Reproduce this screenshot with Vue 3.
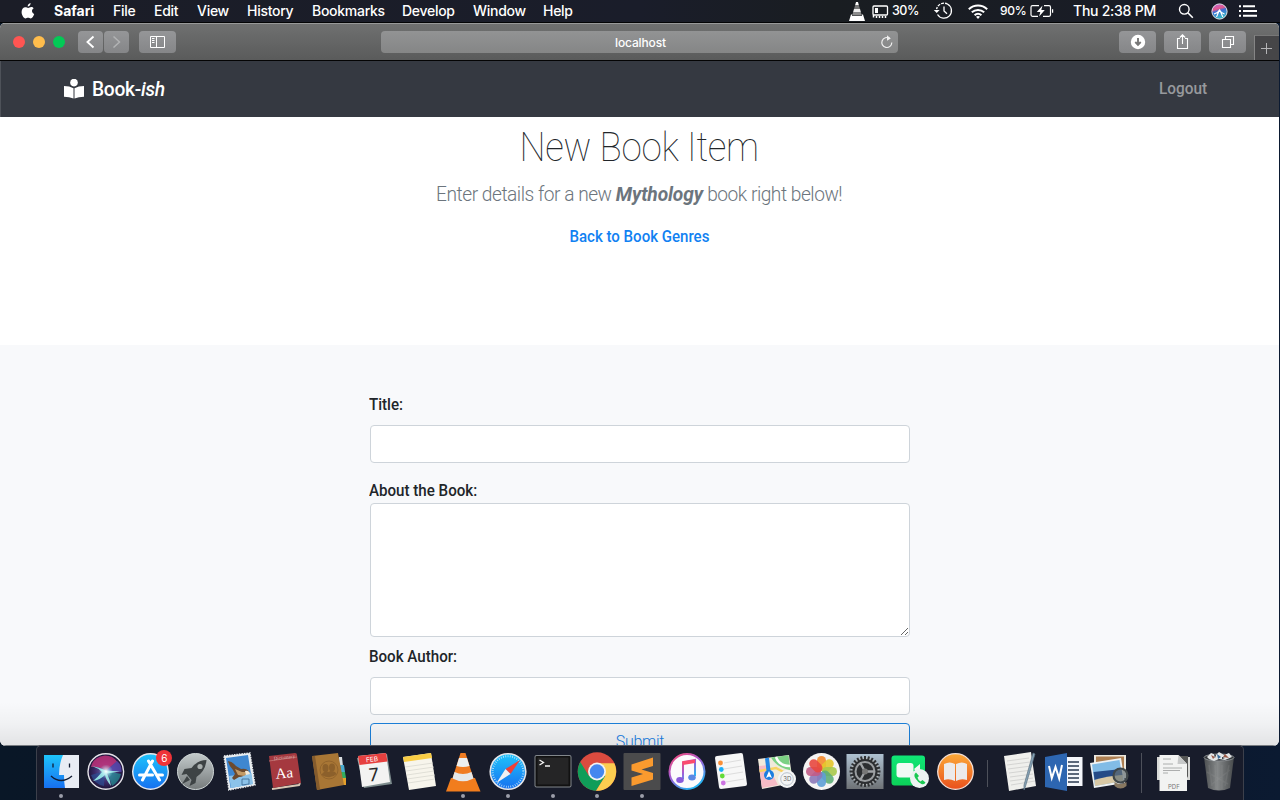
<script setup>
const menus = [
  { t: 'File', w: 41 }, { t: 'Edit', w: 43 }, { t: 'View', w: 50 }, { t: 'History', w: 65 },
  { t: 'Bookmarks', w: 90 }, { t: 'Develop', w: 71 }, { t: 'Window', w: 70 }, { t: 'Help', w: 40 },
]
const petals = ['#f58a2c', '#e6c62c', '#a9c94a', '#5fae78', '#5e9fd6', '#8c79b8', '#c15c86', '#e8483f']
const ticks = Array.from({ length: 24 }, (_, i) => i * 15)
</script>

<template>
  <div class="desktop">
    <header class="menubar">
      <svg class="apple" viewBox="0 0 14 16"><path d="M9.6 0C9.7 1.7 8.3 3.5 6.7 3.5 6.5 1.900 8 .2 9.600 0zM12.600 5.400C11.300 6.200 11 7 11 8c0 1.500 1 2.400 2.200 2.900-.6 1.900-2 4.500-3.500 4.500-1 0-1.400-.6-2.600-.6s-1.700.6-2.600.6C2.600 15.400.6 12 .6 9c0-3 1.800-4.800 3.700-4.800 1.200 0 2 .7 2.900.7.900 0 1.700-.8 3.100-.8 1 0 1.800.5 2.300 1.300z"/></svg>
      <b class="appname">Safari</b>
      <nav class="menus"><span v-for="m in menus" :key="m.t" :style="{ width: m.w + 'px' }">{{ m.t }}</span></nav>
      <div class="status">
        <svg class="s-vlc" width="18" height="20" viewBox="0 0 18 20"><path d="M8 1h2l.8 3H7.200z" fill="#fff"/><path d="M7.200 4h3.600l1.200 4H6z" fill="#777"/><path d="M6 8h6l1 3.500H5z" fill="#eee"/><path d="M5 11.500h8l.8 3H4.200z" fill="#8b8b8b"/><path d="M3 13.500h1.200l-.2 1.500h10l-.2-1.500H15L17 20H1z" fill="#fff"/></svg>
        <svg class="s-mem" width="17" height="15" viewBox="0 0 17 15"><rect x="1" y="2" width="14.500" height="9" rx="1" fill="none" stroke="#fff" stroke-width="1.300"/><path d="M3 4h3v5H3z" fill="#fff"/><path d="M1.500 11v2.500M4.500 12v2M7.500 12v2M10.500 12v2M13.500 12v2" stroke="#fff" stroke-width="1.500"/></svg>
        <span class="p30">30%</span>
        <svg class="s-tm" width="20" height="18" viewBox="0 0 20 18"><path d="M4.500 12.500A7.500 7.500 0 1 0 3.600 7.200" fill="none" stroke="#fff" stroke-width="1.300" stroke-dasharray="30 1 3 1 3 1"/><path d="M.8 8h5.800L3.700 11z" fill="#fff"/><path d="M11 4.500V9l3 2.800" stroke="#fff" stroke-width="1.300" fill="none"/></svg>
        <svg class="s-wifi" width="20" height="15" viewBox="0 0 20 15"><g fill="none" stroke="#fff" stroke-width="2"><path d="M.8 5.200a13.500 13.500 0 0 1 18.400 0"/><path d="M3.800 8.300a9.200 9.200 0 0 1 12.400 0"/><path d="M6.600 11.200a5 5 0 0 1 6.800 0"/></g><path d="M10 15l-2-2.300a3.200 3.200 0 0 1 4 0z" fill="#fff"/></svg>
        <span class="p90">90%</span>
        <svg class="s-bat" width="24" height="14" viewBox="0 0 24 14"><path d="M9 1.700H2.500Q1 1.700 1 3.200v7.600q0 1.500 1.500 1.500H8M14 1.700h5q1.500 0 1.500 1.500v7.600q0 1.500-1.500 1.500h-6M22.600 5.200v3.600" fill="none" stroke="#fff" stroke-width="1.200"/><path d="M12.500 1.500L6.800 8h3.500l-1.200 4.500L14.800 6h-3.500z" fill="#fff"/></svg>
        <span class="clock">Thu 2:38 PM</span>
        <svg class="s-search" width="16" height="16" viewBox="0 0 16 16"><circle cx="6.300" cy="6.300" r="4.800" fill="none" stroke="#fff" stroke-width="1.400"/><path d="M9.800 9.800l5 5" stroke="#fff" stroke-width="1.600"/></svg>
        <svg class="s-siri" width="17" height="17" viewBox="0 0 17 17"><defs><linearGradient id="sm" x1="0" y1="0" x2=".3" y2="1"><stop offset="0" stop-color="#b66ae0"/><stop offset=".4" stop-color="#e5578d"/><stop offset=".55" stop-color="#3c6fd4"/><stop offset="1" stop-color="#35b7c7"/></linearGradient></defs><circle cx="8.500" cy="8.500" r="7.600" fill="url(#sm)" stroke="#e6e6ef" stroke-width="1"/><path d="M3 11q4-1 5.500-4 1.500 3 5 4M8.500 7L5.500 14M8.800 7l3 7" fill="none" stroke="#fff" stroke-width="1.100"/></svg>
        <svg class="s-list" width="18" height="12" viewBox="0 0 18 12"><path d="M0 1.200h2M4 1.200h12M0 6h2M4 6h14M0 10.800h2M4 10.800h14" stroke="#fff" stroke-width="1.900"/></svg>
      </div>
    </header>

    <main class="window">
      <div class="toolbar">
        <i class="light red"></i><i class="light amber"></i><i class="light green"></i>
        <div class="btn back"><svg width="25" height="22" viewBox="0 0 25 22"><path d="M15.500 5.500L9.500 11l6 5.500" fill="none" stroke="#fff" stroke-width="1.900"/></svg></div>
        <div class="btn fwd"><svg width="25" height="22" viewBox="0 0 25 22"><path d="M9.500 5.500l6 5.500-6 5.500" fill="none" stroke="#b2b3b4" stroke-width="1.500"/></svg></div>
        <div class="btn side"><svg width="37" height="22" viewBox="0 0 37 22"><path d="M11.500 5.500h14v11h-14zM17.500 5.500v11M13 7.500h2.500M13 9.500h2.500M13 11.500h2.500" fill="none" stroke="#fff"/></svg></div>
        <div class="address"><span>localhost</span><svg class="reload" width="13" height="14" viewBox="0 0 13 14"><path d="M9.500 3.300A5 5 0 1 0 11.800 7.500" fill="none" stroke="#eee" stroke-width="1.200"/><path d="M7 .3v5.400L10.800 3.400z" fill="#eee"/></svg></div>
        <div class="btn dl"><svg width="37" height="22" viewBox="0 0 37 22"><circle cx="19" cy="11" r="7.200" fill="#fff"/><path d="M19 7V13M16.300 11L19 13.800l2.700-2.800" stroke="#777" stroke-width="1.900" fill="none"/></svg></div>
        <div class="btn share"><svg width="37" height="22" viewBox="0 0 37 22"><path d="M16 7.500h-2.500v10h10v-10H21M18.500 13V4M15.800 6.500l2.700-2.700 2.700 2.700" fill="none" stroke="#fff" stroke-width="1.100"/></svg></div>
        <div class="btn tabs"><svg width="37" height="22" viewBox="0 0 37 22"><path d="M13.500 8.500h8v8h-8zM16.500 8V5.500h8v8H22" fill="none" stroke="#fff" stroke-width="1.100"/></svg></div>
        <div class="newtab"><svg width="23" height="25" viewBox="0 0 23 25"><path d="M6 12.500h11M11.500 7v11" stroke="#b4b4b6"/></svg></div>
      </div>

      <div class="navbar">
        <svg width="20" height="20" viewBox="0 0 20 20"><circle cx="10" cy="3.600" r="3.800" fill="#fff"/><path d="M0 7q5.500 0 9.500 2.300v10.200Q5.500 18 0 17.800zM20 7q-5.500 0-9.500 2.300v10.200Q14.500 18 20 17.800z" fill="#fff"/></svg>
        <div class="brand">Book-<em>ish</em></div>
        <a class="logout">Logout</a>
      </div>

      <section class="intro">
        <h1>New Book Item</h1>
        <p class="lead">Enter details for a new <em>Mythology</em> book right below!</p>
        <a class="genres">Back to Book Genres</a>
      </section>

      <section class="formarea">
        <form @submit.prevent>
          <label class="l1">Title:</label>
          <input type="text" />
          <label class="l2">About the Book:</label>
          <textarea></textarea>
          <label class="l3">Book Author:</label>
          <input type="text" />
          <button type="submit">Submit</button>
        </form>
      </section>
      <div class="fade"></div>
    </main>

    <footer class="dock">
      <svg width="0" height="0" class="defs"><defs>
        <linearGradient id="blue" x2="0" y2="1"><stop offset="0" stop-color="#1ec4fb"/><stop offset="1" stop-color="#1770f0"/></linearGradient>
        <linearGradient id="silver" x2="0" y2="1"><stop offset="0" stop-color="#c3cacb"/><stop offset="1" stop-color="#767b7c"/></linearGradient>
        <linearGradient id="orange" x2="0" y2="1"><stop offset="0" stop-color="#fcaa38"/><stop offset="1" stop-color="#e9501c"/></linearGradient>
        <linearGradient id="green" x2="0" y2="1"><stop offset="0" stop-color="#10e676"/><stop offset="1" stop-color="#0cd159"/></linearGradient>
        <linearGradient id="note" x2=".6" y2="1"><stop offset="0" stop-color="#fb4b6e"/><stop offset=".5" stop-color="#a45bd6"/><stop offset="1" stop-color="#28b4f4"/></linearGradient>
        <linearGradient id="gear" x2="0" y2="1"><stop offset="0" stop-color="#aec1d2"/><stop offset="1" stop-color="#6e7276"/></linearGradient>
        <radialGradient id="siri"><stop offset="0" stop-color="#6b6fb0"/><stop offset=".6" stop-color="#3c2b6b"/><stop offset="1" stop-color="#1c1436"/></radialGradient>
        <radialGradient id="glow"><stop offset="0" stop-color="#fff"/><stop offset="1" stop-color="#9fe8f4" stop-opacity="0"/></radialGradient>
        <linearGradient id="trash"><stop offset="0" stop-color="#4c4f51"/><stop offset=".45" stop-color="#858889"/><stop offset="1" stop-color="#46494b"/></linearGradient>
      </defs></svg>

      <!-- Finder -->
      <div class="app run"><svg viewBox="0 0 40 40"><path d="M3 3h35v33H3z" fill="url(#blue)"/><path d="M22 3h16v33H24q-1-6-1-13h-5q0-11 4-20z" fill="#e8ecf4"/><path d="M12 11.500v4M28.500 11.500v4" stroke="#111b32" stroke-width="1.300"/><path d="M10 24q10 9 21 0" fill="none" stroke="#111b32" stroke-width="1.400"/></svg></div>
      <!-- Siri -->
      <div class="app"><svg viewBox="0 0 40 40"><circle cx="19.800" cy="19.500" r="17.800" fill="url(#siri)" stroke="#e5e3e9" stroke-width="1.400"/><path d="M5 15Q7 5 19 3.500q8 0 12 6l-11 9Q12 14 5 15z" fill="#c8337c" opacity=".8"/><path d="M31 9q5 4 4.500 11L20 19z" fill="#5b4bb4" opacity=".8"/><path d="M5 23l14-4-1 15Q8 32 5 23z" fill="#2c4f93" opacity=".7"/><path d="M21 19l14 3q-2 8-9 12z" fill="#22a7a0" opacity=".6"/><path d="M6 14q7 1 14 4.500l14 1-13 2q3 6 4 12.500-5-6-6-11-5 5-12 6 5-4 9-9-4-4-10-6z" fill="#9ceee9" opacity=".9"/><circle cx="20" cy="19.500" r="7" fill="url(#glow)"/></svg></div>
      <!-- App Store -->
      <div class="app"><svg viewBox="0 0 40 40"><circle cx="20.500" cy="19.500" r="17.800" fill="url(#blue)" stroke="#e8e8ec" stroke-width="1.400"/><path d="M22.500 9L12.500 28M18.500 9l11 19M9.500 23h13M26.500 23h6" stroke="#fff" stroke-width="3" stroke-linecap="round"/></svg><b class="badge">6</b></div>
      <!-- Launchpad -->
      <div class="app"><svg viewBox="0 0 40 40"><circle cx="20.500" cy="19.500" r="18" fill="url(#silver)" stroke="#cfd6d6"/><path d="M31.500 8q-9 0-15 8l-7 1-3 6 5-1 5 6-2 6 6-3 1-6q9-6 10-17zM12 24l-5 8 8-4z" fill="#3e4345"/><circle cx="25" cy="14.500" r="2.600" fill="#a8aead"/></svg></div>
      <!-- Mail -->
      <div class="app"><svg viewBox="0 0 40 40"><path d="M4 4l26-3 5 32-26 5z" fill="#e9edf0" stroke="#e9edf0" stroke-width="1.500" stroke-dasharray="1.500 1"/><path d="M6 6l22-3 4.500 29-22 4z" fill="#3f87d0"/><path d="M9 24l22.500-3 1.500 11-22 4z" fill="#8cc3ea"/><path d="M8 9q5 1 8 5l5 3q6-1 8 3l-3 1q-2 4-7 4l-5 3-2-2 3-4-2-4q-4-4-5-9z" fill="#6d4a2d"/><path d="M15 17l7 3 7 0-5 4-6-1z" fill="#c39b66"/><path d="M25 19q4-1 5 3l-4 1z" fill="#f3ead8"/><path d="M22 27h7v5l-7 1z" fill="none" stroke="#39648f" stroke-width=".8"/></svg></div>
      <!-- Dictionary -->
      <div class="app"><svg viewBox="0 0 40 40"><path d="M8 37l27-4 1-2" stroke="#d8c7b4" stroke-width="2" fill="none"/><path d="M5 4l26-3q2 0 2 2l4 28L9 36z" fill="#a5393f"/><path d="M5 9l28-4" stroke="#bd6a6b"/><text x="11.500" y="26" class="serif" fill="#fff" font-size="15" transform="rotate(-5 20 20)">Aa</text><text x="10" y="7" class="serif" fill="#deb3b3" font-size="5" transform="rotate(-7 20 8)">Dictionary</text></svg></div>
      <!-- Contacts -->
      <div class="app"><svg viewBox="0 0 40 40"><path d="M30 5l3 0 1 9h-4z" fill="#d8dde0"/><path d="M31 13h4l1 7h-4z" fill="#4aabd0"/><path d="M32 20h4l1 6h-4z" fill="#32ad5f"/><path d="M33 26h4v7h-4z" fill="#e4a02c"/><path d="M3 4l26-3 6 32-27 5z" fill="#a87635"/><path d="M3 4l3 0 5 33-3 1z" fill="#845b2d"/><circle cx="20" cy="18" r="9" fill="none" stroke="#8c602b" stroke-width=".8"/><g fill="#8c602b"><ellipse cx="16.500" cy="16" rx="3" ry="4"/><ellipse cx="23" cy="15.500" rx="3" ry="4"/><path d="M12.500 23q1-3 5-4l2 1 2-1q5 0 6 3-6 6-15 1z"/></g></svg></div>
      <!-- Calendar -->
      <div class="app"><svg viewBox="0 0 40 40"><path d="M3 6l30-4 5 30-28 4z" fill="#7e8d8e"/><path d="M4 4l28-3 4 29-28 5z" fill="#f3f3f2"/><path d="M4 4l28-3 1.500 8.500L5.500 13z" fill="#e6403f"/><text x="12" y="9.500" fill="#fff" font-size="6.500" transform="rotate(-6 19 8)">FEB</text><text x="15" y="29" fill="#292929" font-size="18" transform="rotate(-6 20 24)">7</text></svg></div>
      <!-- Notes -->
      <div class="app"><svg viewBox="0 0 40 40"><path d="M4 5l28-4 5 33-27 4z" fill="#f7f5ec"/><path d="M4 5l28-4 1 5-28 4z" fill="#f9cd45"/><path d="M6 15l28-4M7 19l28-4M8 23l27-4M8 27l28-4M9 31l27-4" stroke="#d6d5cd" stroke-width=".7"/></svg></div>
      <!-- VLC -->
      <div class="app run"><svg viewBox="0 0 40 40"><path d="M8 26h24l5.500 13.500H3z" fill="#f17d1d"/><path d="M17.500 1h5l8.500 27q-11 6-22 0z" fill="#f07c22"/><path d="M16 6h8l2.500 8q-6.500 2-13 0z" fill="#eceff0"/><path d="M11.500 20q8.500 4 17 0l2 6.500q-10.500 5.500-21 0z" fill="#e5e8e9"/></svg></div>
      <!-- Safari -->
      <div class="app run"><svg viewBox="0 0 40 40"><circle cx="20" cy="19.500" r="17.800" fill="url(#blue)" stroke="#e4e5e9" stroke-width="1.600"/><circle cx="20" cy="19.500" r="15.300" fill="none" stroke="#c6e9fb" stroke-width="2" stroke-dasharray=".7 1.600"/><path d="M32 8L17.500 17l5 5z" fill="#ed4038"/><path d="M8.500 31l9-14 5 5z" fill="#f1f1f3"/></svg></div>
      <!-- Terminal -->
      <div class="app run"><svg viewBox="0 0 40 40"><rect x="1.500" y="3" width="37" height="32.500" rx="2" fill="#82878c"/><rect x="2.500" y="4" width="35" height="30.500" rx="1" fill="#111"/><path d="M4.500 5.500h31v27h-31z" fill="#252526"/><path d="M6.500 8l4 2.500L6.500 13M12 14h5" fill="none" stroke="#f2f2f2" stroke-width="1.300"/></svg></div>
      <!-- Chrome -->
      <div class="app run"><svg viewBox="0 0 40 40"><circle cx="20" cy="19.500" r="19.300" fill="#db4b3f"/><path d="M3.300 10A19.300 19.300 0 0 0 19 38.800L28.500 24 20 19.500 12 24z" fill="#109d59"/><path d="M19 38.800A19.300 19.300 0 0 0 37.300 11.200H20L28.300 24z" fill="#fccd50"/><circle cx="20" cy="19.500" r="9" fill="#f2f2f2"/><circle cx="20" cy="19.500" r="7.200" fill="#4587ef"/></svg></div>
      <!-- Sublime Text -->
      <div class="app run"><svg viewBox="0 0 40 40"><rect x="1.500" y="1" width="37" height="37" rx="1" fill="#4b4b4c"/><path d="M9.500 12.500L31 5.500v8.500L19.500 17.500 31 21v6.500L9.500 34v-8.500l11.500-3.500-11.500-3.500z" fill="#fa9a2e"/></svg></div>
      <!-- iTunes -->
      <div class="app"><svg viewBox="0 0 40 40"><circle cx="20" cy="19.500" r="17.500" fill="#fbfafc" stroke="url(#note)" stroke-width="2"/><path d="M16 27V10l12-2v16" fill="none" stroke="url(#note)" stroke-width="2"/><path d="M16 13l12-2V7.500l-12 2z" fill="#fb4b6e"/><ellipse cx="13" cy="28" rx="3.800" ry="3" fill="#8a5bdb"/><ellipse cx="25" cy="25.500" rx="3.800" ry="3" fill="#5b88e4"/></svg></div>
      <!-- Reminders -->
      <div class="app"><svg viewBox="0 0 40 40"><path d="M6 3l24-3q2 0 2 2l4 29q0 2-2 2l-24 3q-2 0-2-2L4 5q0-2 2-2z" fill="#f7f7f7" transform="translate(0 1)"/><path d="M13 11l17-3M13 17l18-3M14 23l18-3M15 30l18-3" stroke="#ddd"/><circle cx="9.500" cy="11" r="2.400" fill="#fa8f38"/><circle cx="10.300" cy="17.500" r="2.400" fill="#1badf8"/><circle cx="11.300" cy="24" r="2.400" fill="#63da38"/><circle cx="12.300" cy="31" r="2.400" fill="#cc73e1"/></svg></div>
      <!-- Maps -->
      <div class="app"><svg viewBox="0 0 40 40"><path d="M2 7l31-4 4 28-31 6z" fill="#f0eadb"/><path d="M3 14l9-1 10 20-16 3z" fill="#f6bbc5"/><path d="M15 5.500l17.500-2.300 2 15Q21 16 15 5.500z" fill="#7cd184"/><path d="M20 5q3 9 14 9" fill="none" stroke="#fff" stroke-width="2.500"/><path d="M3.500 19l16.500-3 15 8" fill="none" stroke="#f9d362" stroke-width="2.500"/><path d="M11 6l2 17" stroke="#2388e6" stroke-width="4"/><circle cx="13" cy="23" r="5" fill="#1c7ee0"/><path d="M13 19l3 7-3-1.500-3 1.500z" fill="#fff"/><circle cx="31" cy="27" r="9" fill="#f4f5f6"/><circle cx="31" cy="27" r="6.300" fill="none" stroke="#a9b4be" stroke-width=".8"/><text x="27.300" y="29.200" font-size="6" fill="#666">3D</text></svg></div>
      <!-- Photos -->
      <div class="app"><svg viewBox="0 0 40 40"><circle cx="20.500" cy="19.500" r="18.500" fill="#f5f4f3"/><rect v-for="(c, i) in petals" :key="c" x="16" y="4" width="9" height="15" rx="4.500" :fill="c" opacity=".9" :transform="`rotate(${i * 45} 20.5 19.500)`"/></svg></div>
      <!-- System Preferences -->
      <div class="app"><svg viewBox="0 0 40 40"><path d="M1.500 2h37v35h-37z" fill="url(#gear)"/><circle cx="20" cy="19.500" r="14" fill="#b3b7b9"/><g stroke="#303235" stroke-width="2"><path v-for="t in ticks" :key="t" d="M20 4v4" :transform="`rotate(${t} 20 19.500)`"/></g><circle cx="20" cy="19.500" r="12.500" fill="#2c2e31"/><circle cx="20" cy="19.500" r="9.500" fill="none" stroke="#9a9da0" stroke-width="2"/><path d="M20 19.500h10M20 19.500l-5-9M20 19.500l-5 9" stroke="#a0a3a6" stroke-width="2.300"/><circle cx="20" cy="19.500" r="3" fill="#777"/></svg></div>
      <!-- FaceTime -->
      <div class="app"><svg viewBox="0 0 40 40"><rect x="1.500" y="3.500" width="33.500" height="30" rx="3" fill="url(#green)"/><rect x="6.500" y="11" width="17" height="14.500" rx="3" fill="#f1faf5"/><path d="M24 17l6-5v12z" fill="#f1faf5"/><circle cx="29.500" cy="26.500" r="9.500" fill="#edf3f2"/><path d="M26 20.500q-3 2-.5 6t6 5.500q3 1 4-1.500l-3-2.500-2 1.500q-2.500-1.500-3-4l1.500-1.500z" fill="#1ac952"/></svg></div>
      <!-- Books -->
      <div class="app"><svg viewBox="0 0 40 40"><circle cx="20.500" cy="19.500" r="17.800" fill="url(#orange)" stroke="#f4dfd5" stroke-width="1.300"/><path d="M9 12q6-3 11 0v17q-6-3-11-1zM21 12q6-3 11 0v16q-6-2-11 1z" fill="#eceaea"/></svg></div>
      <i class="sep short"></i>
      <!-- TextEdit -->
      <div class="app"><svg viewBox="0 0 40 40"><path d="M4 4l27-4 5 34-27 5z" fill="#efefec"/><path d="M7 9l22-3M7 13l23-3M8 17l23-3M9 21l23-3M10 25l23-3M10 29l23-3M11 33l24-4" stroke="#c9c9c7" stroke-width=".7"/><path d="M33 1l2 1-10 34-1 2v-5z" fill="#86a2b6" stroke="#5b7181" stroke-width=".7"/></svg></div>
      <!-- Word -->
      <div class="app"><svg viewBox="0 0 40 40"><path d="M20 5h18.500v29H20z" fill="#f4f6fa"/><path d="M24 10h11M24 14h11M24 18h11M24 22h11M24 26h11M24 30h11" stroke="#29394f" stroke-width="1.500"/><path d="M1 5l22-4v38L1 35z" fill="#2d66b1"/><path d="M5 14l2.800 12L11.500 15l3.700 11.500L18 13" stroke="#fff" stroke-width="2" fill="none"/></svg></div>
      <!-- Preview -->
      <div class="app"><svg viewBox="0 0 40 40"><path d="M5 3h32v23H5z" fill="#ece8df"/><path d="M7 4.500h28v14H7z" fill="#ad7f52"/><path d="M1 11l31-5 4 25-31 5z" fill="#eff2f4"/><path d="M3 12.500l27.500-4.500 3.500 21-28 5z" fill="#82bce6"/><path d="M4.500 20l28-3 1 6-28 5z" fill="#254b87"/><path d="M5.500 28q12-4 28-5l.5 6-28 5z" fill="#d8c8a5"/><circle cx="31.500" cy="23.500" r="7" fill="#667276" fill-opacity=".7" stroke="#40474a" stroke-width="2.200"/><path d="M25.500 30q6 4 12 0v4q-6 5-12 0z" fill="#887861"/></svg></div>
      <i class="sep"></i>
      <!-- Downloads -->
      <div class="app"><svg viewBox="0 0 40 40"><path d="M3 5h33v23H3z" fill="#d8d9d7"/><path d="M22 4h12v22z" fill="#555655"/><path d="M5.500 3h19l8.500 9v27H5.500z" fill="#f2f3f2"/><path d="M24.500 3l-1 9H33z" fill="#c7c9c9"/><path d="M9 7h8M9 12h10M9 16h19M9 18.500h17M9 21h5" stroke="#9a9c9c" stroke-width=".8"/><text x="14" y="37" font-size="6" fill="#777">PDF</text></svg></div>
      <!-- Trash -->
      <div class="app"><svg viewBox="0 0 40 40"><path d="M5 5h30l-4 31q-11 5-22 0z" fill="url(#trash)"/><path d="M10 13l3 21M16 13l1 24M23 13v24M30 13l-4 21M8 20l21 12M31 18L12 33" stroke="#a8aaab" stroke-opacity=".15" stroke-width="1.500"/><ellipse cx="20" cy="5.500" rx="15" ry="3.500" fill="#34373b" stroke="#888c90"/><path d="M8 5l4-4 5 2 3-3 5 3 5-2 3 4-7 3-6-1-5 2-5-2z" fill="#e3e6e8"/><path d="M12 3l4 2-2 2zM26 2l4 4-6-1z" fill="#9b5a48"/><path d="M18 2l4 3-3 2z" fill="#366897"/><path d="M15 2l2 1-1 3zM23 5l3 1-3 1z" fill="#2b2d33"/></svg></div>
    </footer>
  </div>
</template>

<style>
body { background: #0b1524; overflow: hidden; }
</style>
<style scoped>
* { box-sizing: border-box; }
.desktop { position: relative; width: 1280px; height: 800px; overflow: hidden; background: linear-gradient(90deg, #091727, #0a1326 60%, #0b1a31); font-family: Inter, "Liberation Sans", sans-serif; color: #fff; }
.menubar { height: 23px; display: flex; align-items: center; background: linear-gradient(90deg, #1b1d27, #1a1d2a 50%, #191d21 65%, #191c29); border-bottom: 1px solid #030405; font-size: 14px; font-weight: 500; line-height: 22px; white-space: nowrap; }
.apple { width: 14px; height: 16px; margin: 0 19px 0 21px; fill: #fff; }
.appname { width: 59px; font-weight: 700; letter-spacing: 0; }
.menus { display: flex; letter-spacing: -.28px; }
.menus span { flex: none; }
.status { margin-left: auto; width: 432px; display: flex; align-items: center; }
.status svg { flex: none; }
.s-mem { margin-left: 6px; }
.p30 { margin-left: 3px; width: 41px; font-size: 12.500px; letter-spacing: -.5px; }
.s-wifi { margin-left: 15px; }
.p90 { margin-left: 12px; width: 30px; font-size: 12px; letter-spacing: -.3px; }
.clock { margin-left: 19px; width: 105px; letter-spacing: -.25px; }
.s-siri { margin-left: 17px; }
.s-list { margin-left: 11px; }
.window { width: 1279px; height: 723px; border-radius: 5px 5px 6px 6px; overflow: hidden; position: relative; background: #fff; display: flex; flex-direction: column; }
.toolbar { flex: none; height: 38px; display: flex; align-items: center; background: linear-gradient(#6f7070, #5a5b5b); border-top: 1px solid #989999; border-bottom: 1px solid #040404; padding-left: 13px; }
.light { width: 12px; height: 12px; border-radius: 50%; margin-right: 8px; }
.red { background: #ff5552; } .amber { background: #ffbd4c; } .green { background: #03ca56; }
.btn { height: 22px; border-radius: 4px; background: linear-gradient(#959698, #858688); flex: none; }
.btn svg, .newtab svg { display: block; }
.back { width: 25px; margin-left: 5px; }
.fwd { width: 25px; margin-left: 1px; }
.side { width: 37px; margin-left: 10px; }
.address { width: 517px; height: 22px; margin-left: 205px; border-radius: 4px; background: linear-gradient(#929394, #858686); display: flex; align-items: center; justify-content: center; position: relative; font-size: 12px; font-weight: 500; letter-spacing: -.15px; padding-left: 2px; }
.reload { position: absolute; right: 5px; top: 4px; }
.dl { width: 37px; margin-left: 221px; }
.share, .tabs { width: 37px; margin-left: 8px; }
.newtab { width: 25px; height: 25px; margin-left: 8px; align-self: flex-end; background: #464648; border-left: 1px solid #858585; border-top: 1px solid #777; }
.navbar { flex: none; height: 56px; background: #353941; display: flex; align-items: center; padding: 0 72px 0 63px; font-family: Roboto, sans-serif; border-left: 1px solid #4e5259; }
.brand { font-size: 20px; font-weight: 500; margin-left: 8px; letter-spacing: -.3px; transform: scaleX(.96); transform-origin: left; }
.logout { margin: 0 0 2px auto; font-size: 16px; font-weight: 500; color: #97999d; transform: scaleX(.96); transform-origin: right; }
.intro { flex: none; height: 228px; display: flex; flex-direction: column; align-items: center; font-family: Roboto, sans-serif; color: #212529; white-space: nowrap; }
h1 { margin: 7px 0 0; font-size: 40px; line-height: 48px; font-weight: 250; letter-spacing: -.3px; transform: scaleX(.92); }
.lead { margin: 7px 0 0; font-size: 20px; line-height: 30px; font-weight: 300; color: #6c757d; letter-spacing: -.5px; transform: scaleX(.957); }
.lead em { font-weight: 700; letter-spacing: -.1px; }
.genres { margin-top: 16px; font-size: 16px; line-height: 24px; font-weight: 500; color: #1181f2; transform: scaleX(.94); }
.formarea { flex: 1; background: #f8f9fb; display: flex; justify-content: center; font-family: Roboto, sans-serif; color: #212529; }
form { width: 540px; margin-left: 1px; padding-top: 48px; display: flex; flex-direction: column; }
label { font-size: 16px; line-height: 24px; font-weight: 500; margin-left: -1px; transform: scaleX(.945); transform-origin: left; }
input { flex: none; height: 38px; border: 1px solid #ced4da; border-radius: 4px; background: #fff; width: 540px; }
.l1 { margin-bottom: 8px; }
.l2 { margin-top: 16px; }
.l3 { margin: 8px 0 8px -1px; }
textarea { flex: none; display: block; width: 540px; height: 134px; border: 1px solid #ced4da; border-radius: 4px; background: #fff; margin: 0; resize: vertical; }
button { flex: none; margin-top: 8px; height: 38px; border: 1px solid #1c82dd; border-radius: 4px; background: transparent; color: #1680e8; font: 300 16px/34px Roboto, sans-serif; letter-spacing: -.3px; }
.fade { position: absolute; left: 0; right: 0; bottom: 0; height: 44px; background: linear-gradient(rgba(0,0,0,0), rgba(0,0,0,.03) 50%, rgba(0,0,0,.085)); pointer-events: none; border-bottom: 1px solid #777b80; }
.dock { position: absolute; left: 36px; top: 745px; width: 1208px; height: 60px; background: #181c2b; border: 1px solid #3c404b; border-top-color: #555860; border-radius: 5px; display: flex; align-items: flex-start; gap: 4.700px; padding: 6px 0 0 4px; }
.defs { position: absolute; }
.app { width: 40px; height: 48px; flex: none; position: relative; }
.app > svg { width: 40px; height: 40px; display: block; }
.run::after { content: ""; display: block; width: 4px; height: 4px; border-radius: 50%; background: #9b9da9; margin: 2px auto 0; }
.badge { position: absolute; right: -2px; top: -2px; width: 16px; height: 16px; border-radius: 50%; background: #ef3338; font: 400 10px/16px Inter, sans-serif; text-align: center; }
.sep { flex: none; width: 1px; height: 40px; background: #4d505a; margin: 1px 7.300px 0; }
.sep.short { height: 27px; margin-top: 8px; }
.serif { font-family: "Liberation Serif", serif; }
</style>
